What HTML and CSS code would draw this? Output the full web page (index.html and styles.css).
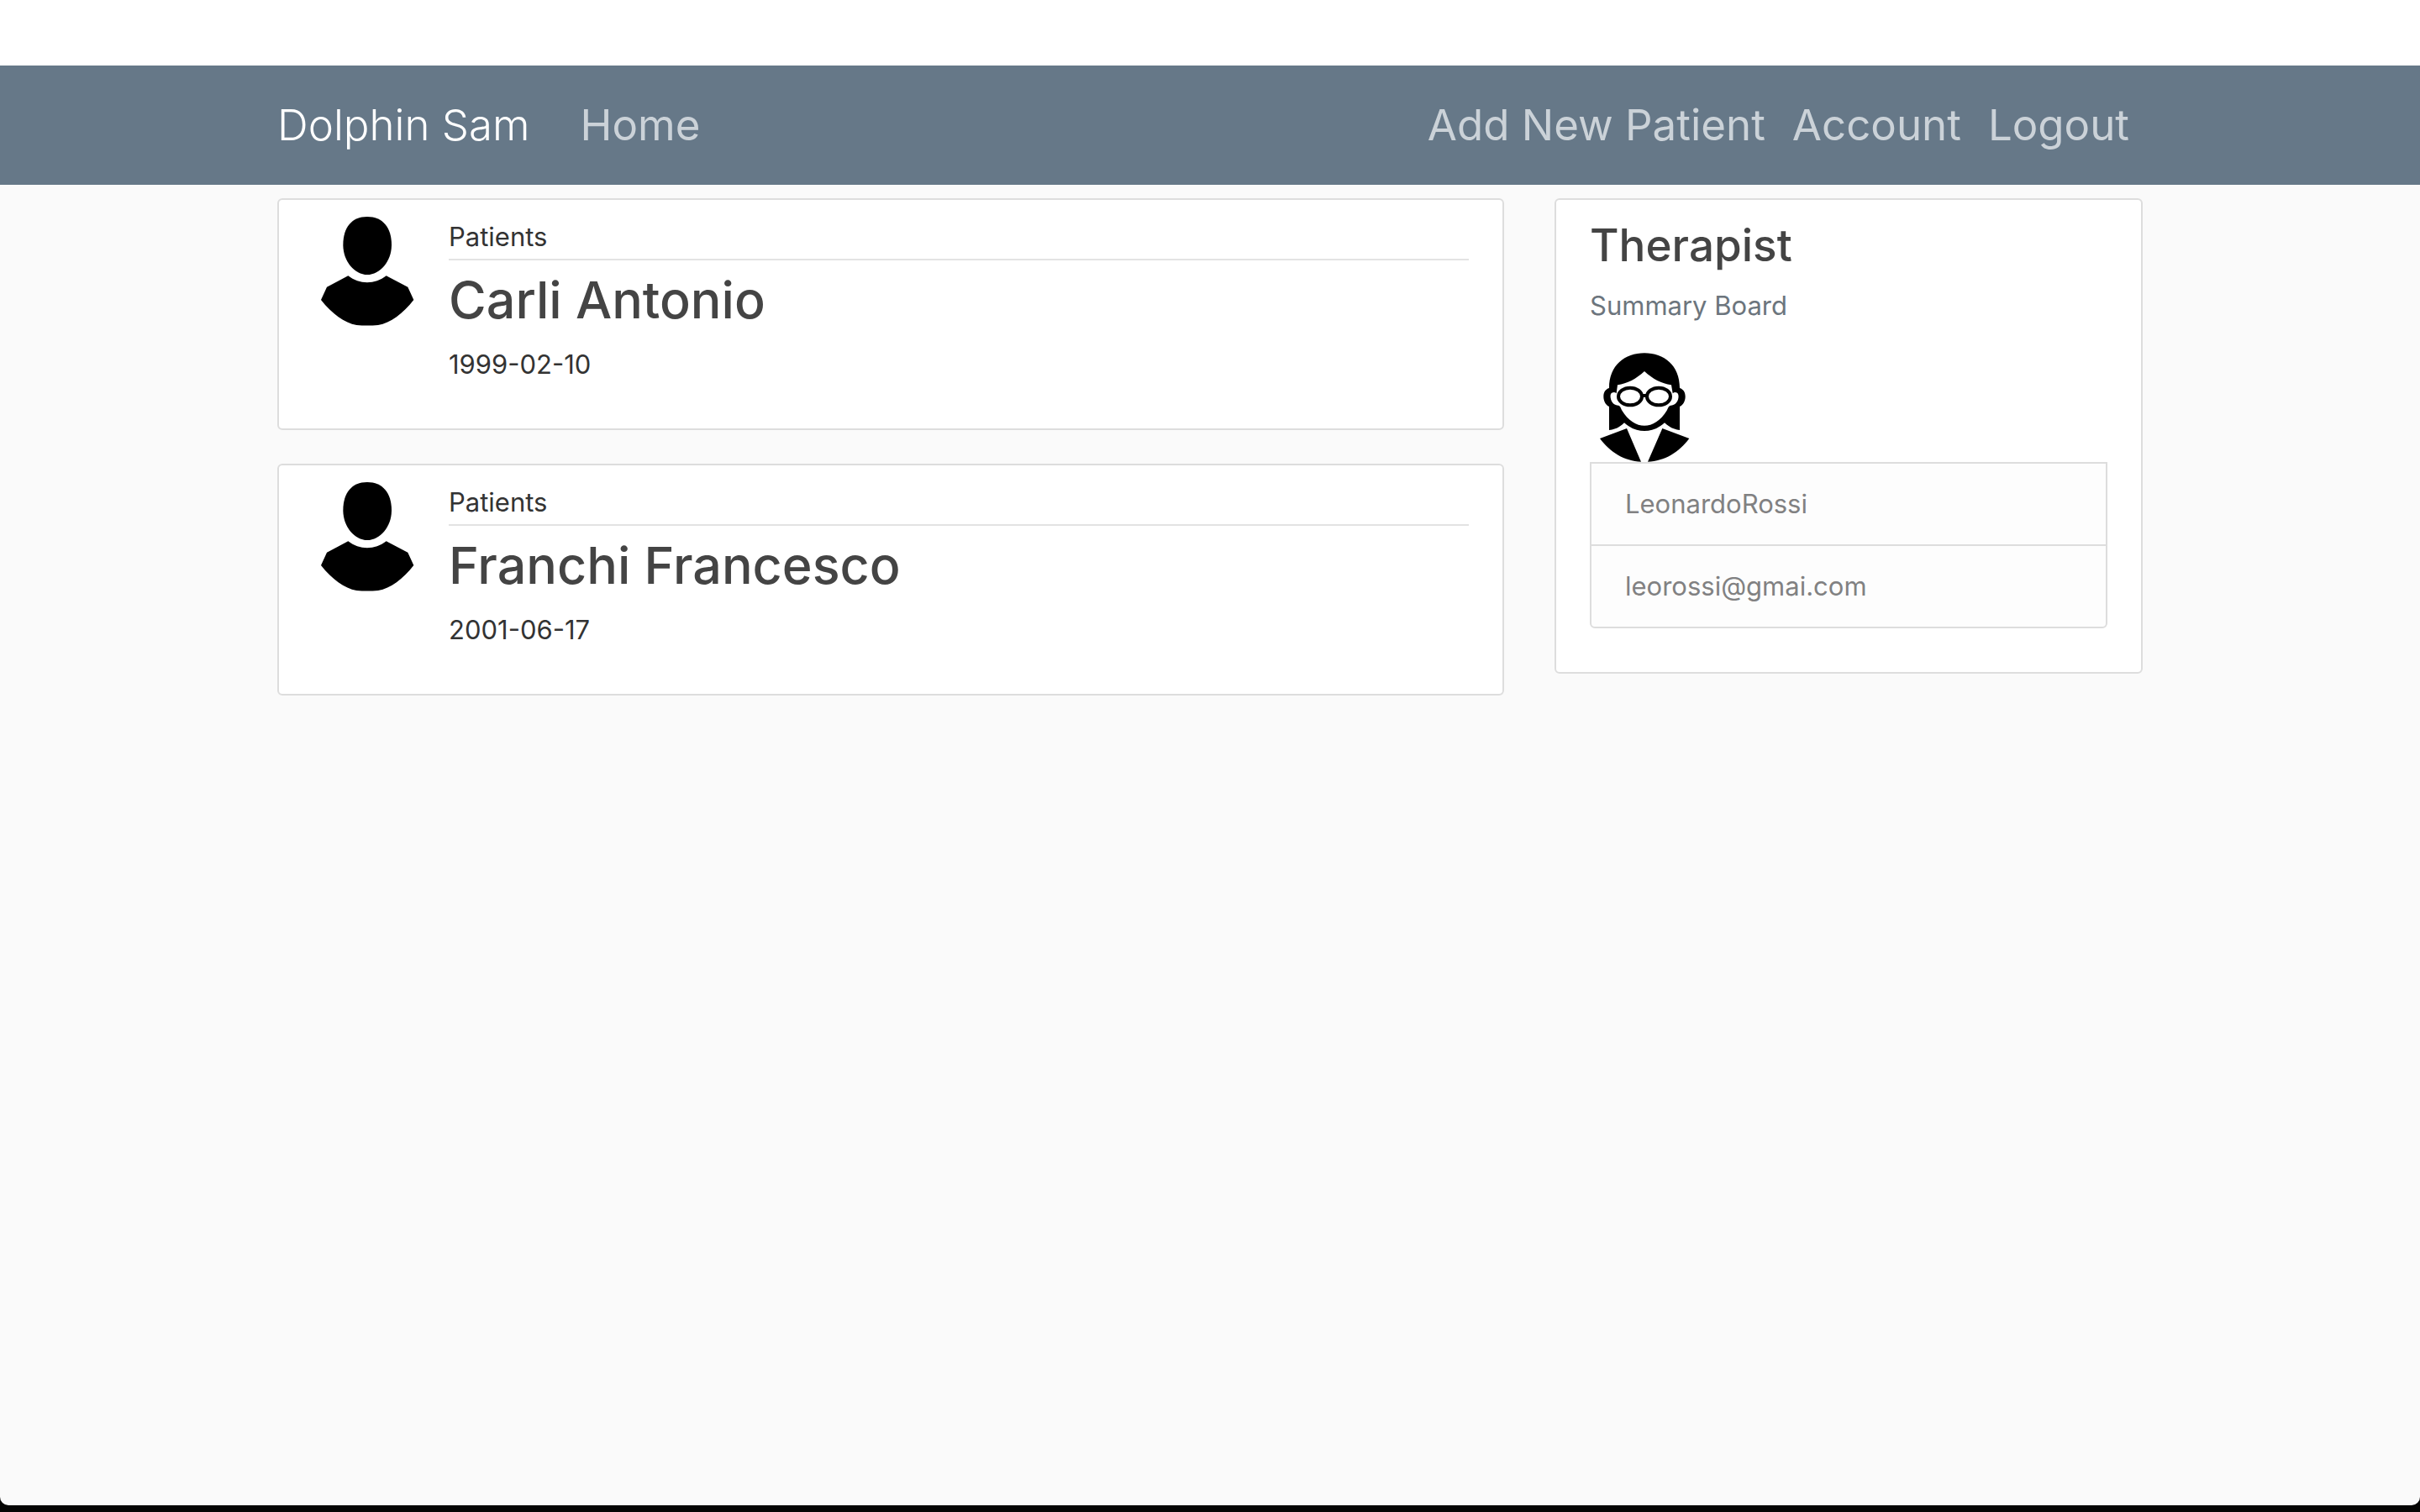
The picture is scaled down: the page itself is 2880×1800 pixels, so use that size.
FILE: index.html
```html
<!DOCTYPE html>
<html lang="en">
<head>
<meta charset="utf-8">
<meta name="viewport" content="width=device-width, initial-scale=1">
<title>Dolphin Sam</title>
<link rel="stylesheet" href="styles.css">
</head>
<body>
<div class="page">
  <header class="site-header">
    <nav class="container navbar">
      <a class="brand" href="#">Dolphin Sam</a>
      <div class="nav-group nav-main">
        <a class="nav-link" href="#">Home</a>
      </div>
      <div class="nav-group">
        <a class="nav-link" href="#">Add New Patient</a>
        <a class="nav-link" href="#">Account</a>
        <a class="nav-link" href="#">Logout</a>
      </div>
    </nav>
  </header>

  <main class="container layout">
    <div class="patients">
      <article class="card patient">
        <svg class="avatar" viewBox="36 54 390 390" aria-hidden="true">
          <path d="M231 54C286 54 318 92 318 155C318 213 276 261 231 261C187 261 145 213 145 155C145 92 176 54 231 54Z"/>
          <path d="M163 265C203 297 259 297 299 265L376 305L397 351C358 401 315 433 270 441Q231 444 193 441C150 433 105 401 66 351L87 305Z"/>
        </svg>
        <div class="patient-body">
          <div class="patient-meta">Patients</div>
          <h2 class="patient-name">Carli Antonio</h2>
          <p class="patient-date">1999-02-10</p>
        </div>
      </article>
      <article class="card patient">
        <svg class="avatar" viewBox="36 54 390 390" aria-hidden="true">
          <path d="M231 54C286 54 318 92 318 155C318 213 276 261 231 261C187 261 145 213 145 155C145 92 176 54 231 54Z"/>
          <path d="M163 265C203 297 259 297 299 265L376 305L397 351C358 401 315 433 270 441Q231 444 193 441C150 433 105 401 66 351L87 305Z"/>
        </svg>
        <div class="patient-body">
          <div class="patient-meta">Patients</div>
          <h2 class="patient-name">Franchi Francesco</h2>
          <p class="patient-date">2001-06-17</p>
        </div>
      </article>
    </div>

    <aside class="card therapist">
      <h3 class="therapist-title">Therapist</h3>
      <p class="therapist-subtitle">Summary Board</p>
      <svg class="avatar" viewBox="36 60 390 390" aria-hidden="true">
        <path fill-rule="evenodd" d="M231 61C301 61 357 105 357 186C370 190 377 201 377 216C377 232 370 246 357 252V336C335 333 317 324 303 310C261 349 201 349 159 310C146 324 128 333 105 336V252C92 246 85 232 85 216C85 201 92 190 105 186C105 105 161 61 231 61ZM231 126C202 153 170 170 135 175L131 205C125 199 116 200 111 207C106 221 115 249 138 248C146 250 147 259 151 266C196 338 266 338 311 266C315 259 316 250 325 248C347 249 357 221 351 207C347 200 338 199 332 205L327 175C292 170 260 153 231 126Z"/>
        <g fill="none" stroke="#000" stroke-width="12">
          <ellipse cx="180" cy="216" rx="42" ry="31"/>
          <ellipse cx="282" cy="216" rx="42" ry="31"/>
          <path d="M222 213H240"/>
        </g>
        <path d="M168 330L219 449C160 447 108 415 72 366ZM295 330L391 366C355 415 303 447 243 449Z"/>
      </svg>
      <ul class="list">
        <li class="list-item">LeonardoRossi</li>
        <li class="list-item">leorossi@gmai.com</li>
      </ul>
    </aside>
  </main>
</div>
</body>
</html>
```
FILE: styles.css
```css
* {
  box-sizing: border-box;
}

html {
  background: #050504;
}

body {
  margin: 0;
  color: #333;
  font-family: Inter, "Liberation Sans", sans-serif;
  font-size: 31px;
  line-height: 48px;
}

h2, h3, p, ul {
  margin: 0;
  padding: 0;
}

.page {
  min-height: calc(100vh - 8px);
  overflow: hidden;
  border-radius: 0 0 10px 10px;
  background: #fafafa;
}

.container {
  width: calc(100% - 60px);
  max-width: 2220px;
  margin: 0 auto;
}

/* Header */

.site-header {
  border-top: 78px solid #fff;
  background: #667888;
}

.navbar {
  display: flex;
  align-items: center;
  padding: 30px 0;
  font-size: 51px;
  line-height: 82px;
}

.brand {
  margin-right: 44px;
  color: #fff;
  font-weight: 300;
  text-decoration: none;
}

.nav-group {
  display: flex;
}

.nav-main {
  margin-right: auto;
}

.nav-link {
  padding: 0 16px;
  color: #cbd2d8;
  text-decoration: none;
}

/* Layout */

.layout {
  display: grid;
  grid-template-columns: repeat(12, 1fr);
  column-gap: 60px;
  align-items: start;
  padding-top: 16px;
}

.patients {
  display: grid;
  grid-column: span 8;
  gap: 40px;
}

.card {
  padding: 20px 40px;
  border: 2px solid #ddd;
  border-radius: 6px;
  background: #fff;
}

.avatar {
  display: block;
  flex: none;
  width: 130px;
  height: 130px;
}

/* Patient card */

.patient {
  display: flex;
  gap: 32px;
}

.patient-body {
  flex: 1;
}

.patient-meta {
  margin-bottom: 8px;
  padding-bottom: 2px;
  border-bottom: 2px solid #e3e3e3;
}

.patient-name {
  margin-bottom: 14px;
  color: #444;
  font-size: 61px;
  font-weight: 500;
  line-height: 78px;
}

.patient-date {
  margin-bottom: 32px;
}

/* Therapist card */

.therapist {
  grid-column: span 4;
}

.therapist-title {
  margin-bottom: 14px;
  color: #444;
  font-size: 53px;
  font-weight: 500;
  line-height: 68px;
}

.therapist-subtitle {
  margin-bottom: 32px;
  color: #6c757d;
}

.list {
  margin-bottom: 32px;
  border: 2px solid #ddd;
  border-radius: 0 0 6px 6px;
  background: #fdfdfd;
  color: #818182;
  list-style: none;
}

.list-item {
  padding: 24px 40px;
}

.list-item + .list-item {
  border-top: 2px solid #ddd;
}
```
